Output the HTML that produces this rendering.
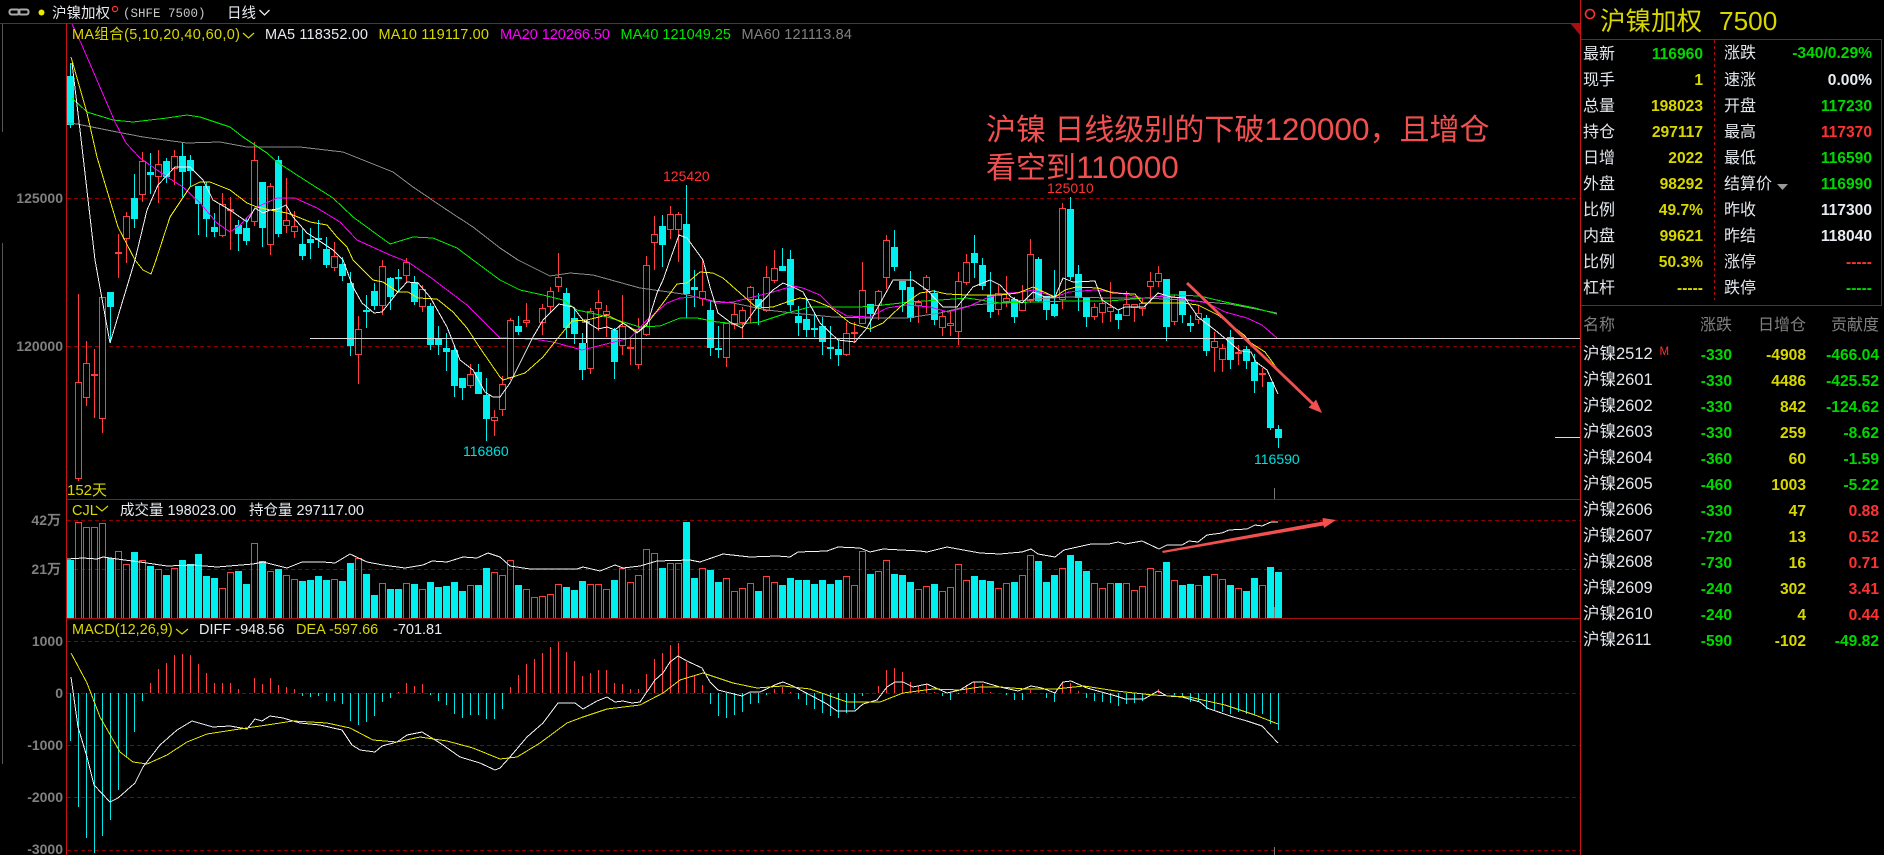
<!DOCTYPE html>
<html lang="zh"><head><meta charset="utf-8"><title>沪镍加权</title>
<style>
html,body{margin:0;padding:0;background:#000;width:1884px;height:855px;overflow:hidden}
svg{display:block;font-family:"Liberation Sans","Noto Sans CJK SC",sans-serif}
.l{shape-rendering:crispEdges;fill:none}
.t{font-size:16px;fill:#e4e8ec}
.b{font-size:15.6px;font-weight:bold;text-anchor:end}
.a{font-size:14px;font-weight:bold;fill:#808080;text-anchor:end}
.m{font-size:14.5px}
.n{font-size:16.5px;fill:#e4e8ec}
.g{fill:#00d800}.y{fill:#d8d800}.r{fill:#ff3232}.w{fill:#e8ecf0}
</style></head><body>
<svg width="1884" height="855" viewBox="0 0 1884 855" xmlns="http://www.w3.org/2000/svg">
<rect width="1884" height="855" fill="#000"/>
<!-- grid -->
<g class="l" stroke="#8c0000" stroke-dasharray="4 3">
<path d="M67 198.5H1580M67 346.5H1580M67 520.5H1580M67 569.5H1580M67 641.5H1580M67 693.5H1580M67 745.5H1580M67 797.5H1580M67 850.5H1580"/>
</g>
<!-- volume cyan -->
<path fill="#00f0f0" shape-rendering="crispEdges" d="M67 560h7V618h-7zM107 558h7V618h-7zM131 552h7V618h-7zM147 566h7V618h-7zM163 575h7V618h-7zM179 560h7V618h-7zM187 564h7V618h-7zM195 554h7V618h-7zM203 576h7V618h-7zM211 578h7V618h-7zM235 571h7V618h-7zM243 584h7V618h-7zM259 561h7V618h-7zM275 569h7V618h-7zM299 581h7V618h-7zM307 580h7V618h-7zM315 576h7V618h-7zM323 580h7V618h-7zM339 581h7V618h-7zM347 563h7V618h-7zM363 574h7V618h-7zM371 595h7V618h-7zM387 589h7V618h-7zM395 589h7V618h-7zM411 584h7V618h-7zM427 582h7V618h-7zM435 587h7V618h-7zM443 586h7V618h-7zM451 582h7V618h-7zM459 591h7V618h-7zM475 585h7V618h-7zM483 568h7V618h-7zM515 585h7V618h-7zM563 587h7V618h-7zM571 590h7V618h-7zM579 581h7V618h-7zM611 580h7V618h-7zM659 568h7V618h-7zM683 522h7V618h-7zM691 578h7V618h-7zM707 570h7V618h-7zM715 582h7V618h-7zM755 591h7V618h-7zM779 585h7V618h-7zM787 578h7V618h-7zM795 580h7V618h-7zM803 580h7V618h-7zM811 584h7V618h-7zM819 580h7V618h-7zM827 584h7V618h-7zM835 580h7V618h-7zM867 574h7V618h-7zM891 574h7V618h-7zM899 575h7V618h-7zM907 582h7V618h-7zM931 584h7V618h-7zM971 576h7V618h-7zM979 580h7V618h-7zM987 581h7V618h-7zM1011 582h7V618h-7zM1035 561h7V618h-7zM1043 582h7V618h-7zM1051 575h7V618h-7zM1067 555h7V618h-7zM1075 561h7V618h-7zM1083 571h7V618h-7zM1115 583h7V618h-7zM1163 562h7V618h-7zM1179 585h7V618h-7zM1187 584h7V618h-7zM1203 576h7V618h-7zM1227 585h7V618h-7zM1243 591h7V618h-7zM1251 578h7V618h-7zM1267 567h7V618h-7zM1275 572h7V618h-7z"/>
<!-- volume red -->
<path class="l" stroke="#ff3c3c" d="M75.5 618V522.5h6V618M83.5 618V527.5h6V618M91.5 618V527.5h6V618M99.5 618V523.5h6V618M115.5 618V551.5h6V618M123.5 618V564.5h6V618M139.5 618V560.5h6V618M155.5 618V569.5h6V618M171.5 618V568.5h6V618M219.5 618V588.5h6V618M227.5 618V572.5h6V618M251.5 618V543.5h6V618M267.5 618V571.5h6V618M283.5 618V575.5h6V618M291.5 618V579.5h6V618M331.5 618V579.5h6V618M355.5 618V558.5h6V618M379.5 618V583.5h6V618M403.5 618V583.5h6V618M419.5 618V589.5h6V618M467.5 618V585.5h6V618M491.5 618V572.5h6V618M499.5 618V575.5h6V618M507.5 618V560.5h6V618M523.5 618V589.5h6V618M531.5 618V597.5h6V618M539.5 618V596.5h6V618M547.5 618V594.5h6V618M555.5 618V584.5h6V618M587.5 618V584.5h6V618M595.5 618V584.5h6V618M603.5 618V589.5h6V618M619.5 618V568.5h6V618M627.5 618V582.5h6V618M635.5 618V575.5h6V618M643.5 618V549.5h6V618M651.5 618V553.5h6V618M667.5 618V563.5h6V618M675.5 618V563.5h6V618M699.5 618V568.5h6V618M723.5 618V578.5h6V618M731.5 618V591.5h6V618M739.5 618V588.5h6V618M747.5 618V583.5h6V618M763.5 618V576.5h6V618M771.5 618V582.5h6V618M843.5 618V576.5h6V618M851.5 618V585.5h6V618M859.5 618V551.5h6V618M875.5 618V571.5h6V618M883.5 618V560.5h6V618M915.5 618V589.5h6V618M923.5 618V586.5h6V618M939.5 618V591.5h6V618M947.5 618V587.5h6V618M955.5 618V564.5h6V618M963.5 618V580.5h6V618M995.5 618V588.5h6V618M1003.5 618V583.5h6V618M1019.5 618V575.5h6V618M1027.5 618V555.5h6V618M1059.5 618V568.5h6V618M1091.5 618V583.5h6V618M1099.5 618V588.5h6V618M1107.5 618V583.5h6V618M1123.5 618V583.5h6V618M1131.5 618V590.5h6V618M1139.5 618V586.5h6V618M1147.5 618V568.5h6V618M1155.5 618V571.5h6V618M1171.5 618V580.5h6V618M1195.5 618V585.5h6V618M1211.5 618V574.5h6V618M1219.5 618V579.5h6V618M1235.5 618V588.5h6V618M1259.5 618V585.5h6V618"/>
<!-- macd histogram -->
<path class="l" stroke="#00e8e8" d="M70.5 693V741M78.5 693V807M86.5 693V838M94.5 693V853M102.5 693V836M110.5 693V820M118.5 693V790M126.5 693V757M134.5 693V732M142.5 693V701M302.5 693V696M310.5 693V697M318.5 693V696M326.5 693V701M334.5 693V701M342.5 693V704M350.5 693V721M358.5 693V725M366.5 693V722M374.5 693V716M382.5 693V702M390.5 693V698M430.5 693V695M438.5 693V701M446.5 693V705M454.5 693V714M462.5 693V718M470.5 693V715M478.5 693V715M486.5 693V719M494.5 693V719M502.5 693V709M710.5 693V704M718.5 693V716M726.5 693V718M734.5 693V715M742.5 693V712M750.5 693V704M758.5 693V703M766.5 693V695M798.5 693V699M806.5 693V705M814.5 693V709M822.5 693V713M830.5 693V716M838.5 693V718M846.5 693V713M854.5 693V709M862.5 693V696M942.5 693V696M950.5 693V700M958.5 693V694M1006.5 693V695M1014.5 693V700M1022.5 693V700M1046.5 693V698M1054.5 693V702M1086.5 693V698M1094.5 693V701M1102.5 693V702M1110.5 693V703M1118.5 693V706M1126.5 693V704M1134.5 693V703M1142.5 693V701M1174.5 693V695M1182.5 693V697M1190.5 693V702M1198.5 693V702M1206.5 693V709M1214.5 693V710M1222.5 693V712M1230.5 693V714M1238.5 693V712M1246.5 693V714M1254.5 693V715M1262.5 693V714M1270.5 693V724M1278.5 693V730"/>
<path class="l" stroke="#ff3c3c" d="M150.5 693V683M158.5 693V669M166.5 693V663M174.5 693V655M182.5 693V654M190.5 693V655M198.5 693V664M206.5 693V673M214.5 693V683M222.5 693V683M230.5 693V683M238.5 693V689M254.5 693V678M262.5 693V684M270.5 693V678M278.5 693V685M286.5 693V687M294.5 693V689M398.5 693V692M406.5 693V683M414.5 693V686M422.5 693V684M510.5 693V687M518.5 693V675M526.5 693V664M534.5 693V659M542.5 693V653M550.5 693V647M558.5 693V642M566.5 693V652M574.5 693V661M582.5 693V676M590.5 693V673M598.5 693V670M606.5 693V670M614.5 693V683M622.5 693V684M630.5 693V689M638.5 693V689M646.5 693V674M654.5 693V659M662.5 693V653M670.5 693V645M678.5 693V643M686.5 693V662M694.5 693V675M702.5 693V685M774.5 693V689M782.5 693V687M790.5 693V692M878.5 693V686M886.5 693V670M894.5 693V668M902.5 693V672M910.5 693V682M918.5 693V686M926.5 693V684M934.5 693V692M966.5 693V685M974.5 693V682M982.5 693V684M990.5 693V692M1030.5 693V690M1062.5 693V682M1070.5 693V683M1078.5 693V691M1158.5 693V689"/>
<!-- candles cyan -->
<path fill="#00f0f0" stroke="#00f0f0" shape-rendering="crispEdges" d="M70.5 63V128M67.5 76.5h6V124.5h-6zM110.5 292V343M107.5 292.5h6V306.5h-6zM134.5 174V228M131.5 198.5h6V218.5h-6zM150.5 153V194M147.5 172.5h6V174.5h-6zM166.5 158V183M163.5 161.5h6V176.5h-6zM182.5 142V197M179.5 156.5h6V171.5h-6zM190.5 155V187M187.5 160.5h6V170.5h-6zM198.5 186V235M195.5 186.5h6V203.5h-6zM206.5 182V237M203.5 186.5h6V218.5h-6zM214.5 213V237M211.5 227.5h6V231.5h-6zM238.5 220V251M235.5 225.5h6V233.5h-6zM246.5 218V245M243.5 228.5h6V240.5h-6zM262.5 182V247M259.5 182.5h6V227.5h-6zM278.5 156V237M275.5 160.5h6V233.5h-6zM302.5 229V260M299.5 244.5h6V255.5h-6zM310.5 228V259M307.5 239.5h6V242.5h-6zM318.5 220V248M315.5 238.5h6V239.5h-6zM326.5 237V268M323.5 249.5h6V264.5h-6zM342.5 257V281M339.5 264.5h6V275.5h-6zM350.5 272V356M347.5 283.5h6V345.5h-6zM366.5 295V328M363.5 310.5h6V311.5h-6zM374.5 283V310M371.5 291.5h6V305.5h-6zM390.5 277V310M387.5 278.5h6V296.5h-6zM398.5 269V292M395.5 277.5h6V278.5h-6zM414.5 276V305M411.5 282.5h6V301.5h-6zM430.5 303V350M427.5 306.5h6V344.5h-6zM438.5 326V355M435.5 339.5h6V344.5h-6zM446.5 333V371M443.5 348.5h6V351.5h-6zM454.5 345V397M451.5 350.5h6V385.5h-6zM462.5 378V400M459.5 378.5h6V387.5h-6zM478.5 364V394M475.5 372.5h6V393.5h-6zM486.5 378V441M483.5 395.5h6V418.5h-6zM518.5 316V335M515.5 326.5h6V331.5h-6zM566.5 288V338M563.5 293.5h6V327.5h-6zM574.5 307V344M571.5 318.5h6V333.5h-6zM582.5 333V380M579.5 343.5h6V369.5h-6zM614.5 328V379M611.5 330.5h6V361.5h-6zM662.5 215V267M659.5 226.5h6V244.5h-6zM686.5 185V318M683.5 224.5h6V293.5h-6zM694.5 270V307M691.5 287.5h6V289.5h-6zM710.5 300V356M707.5 310.5h6V347.5h-6zM718.5 326V358M715.5 348.5h6V349.5h-6zM758.5 293V325M755.5 299.5h6V306.5h-6zM782.5 248V271M779.5 266.5h6V270.5h-6zM790.5 250V311M787.5 259.5h6V304.5h-6zM798.5 306V336M795.5 316.5h6V322.5h-6zM806.5 297V337M803.5 319.5h6V329.5h-6zM814.5 312V337M811.5 328.5h6V329.5h-6zM822.5 317V355M819.5 326.5h6V341.5h-6zM830.5 326V359M827.5 347.5h6V348.5h-6zM838.5 340V366M835.5 349.5h6V354.5h-6zM870.5 304V332M867.5 304.5h6V313.5h-6zM894.5 230V271M891.5 247.5h6V266.5h-6zM902.5 281V312M899.5 281.5h6V289.5h-6zM910.5 271V322M907.5 287.5h6V317.5h-6zM934.5 290V325M931.5 293.5h6V319.5h-6zM974.5 235V278M971.5 253.5h6V262.5h-6zM982.5 258V290M979.5 265.5h6V285.5h-6zM990.5 272V318M987.5 295.5h6V311.5h-6zM1014.5 297V323M1011.5 299.5h6V316.5h-6zM1038.5 257V302M1035.5 259.5h6V300.5h-6zM1046.5 296V320M1043.5 296.5h6V309.5h-6zM1054.5 270V317M1051.5 304.5h6V315.5h-6zM1070.5 197V280M1067.5 209.5h6V276.5h-6zM1078.5 265V311M1075.5 274.5h6V297.5h-6zM1086.5 298V327M1083.5 298.5h6V316.5h-6zM1118.5 310V329M1115.5 314.5h6V319.5h-6zM1166.5 279V341M1163.5 279.5h6V326.5h-6zM1182.5 291V323M1179.5 291.5h6V314.5h-6zM1190.5 315V332M1187.5 323.5h6V325.5h-6zM1206.5 315V356M1203.5 318.5h6V350.5h-6zM1230.5 330V369M1227.5 337.5h6V359.5h-6zM1246.5 346V369M1243.5 349.5h6V360.5h-6zM1254.5 354V393M1251.5 362.5h6V380.5h-6zM1270.5 382V430M1267.5 382.5h6V427.5h-6zM1278.5 425V448M1275.5 429.5h6V437.5h-6z"/>
<!-- candles red -->
<path class="l" stroke="#ff3c3c" d="M78.5 294V481M86.5 341V406M94.5 349V418M102.5 297V433M118.5 234V278M126.5 212V263M142.5 152V202M158.5 150V203M174.5 150V185M222.5 193V237M230.5 197V250M254.5 142V226M270.5 183V255M286.5 178V233M294.5 211V238M334.5 242V271M358.5 316V384M382.5 260V315M406.5 258V283M422.5 285V312M470.5 364V388M494.5 410V436M502.5 376V416M510.5 318V380M526.5 303V327M542.5 304V335M550.5 287V313M558.5 253V292M590.5 308V374M598.5 290V331M606.5 305V337M622.5 295V355M630.5 338V365M638.5 318V369M646.5 256V336M654.5 216V270M670.5 206V239M678.5 212V262M702.5 260V306M726.5 323V367M734.5 303V329M742.5 307V338M750.5 286V323M766.5 266V312M774.5 250V283M846.5 322V356M854.5 322V343M862.5 262V324M878.5 290V320M886.5 235V289M918.5 300V323M926.5 275V313M942.5 310V336M950.5 310V336M958.5 272V345M966.5 254V285M998.5 285V315M1006.5 276V307M1022.5 285V311M1030.5 239V303M1062.5 203V309M1094.5 303V320M1102.5 297V323M1110.5 282V322M1126.5 291V316M1134.5 304V322M1142.5 298V316M1150.5 272V303M1158.5 266V287M1174.5 295V325M1198.5 305V324M1214.5 332V372M1222.5 344V372M1238.5 345V365M1262.5 368V387"/>
<path fill="#000" stroke="#ff3c3c" shape-rendering="crispEdges" d="M75.5 382.5h6V478.5h-6zM83.5 363.5h6V397.5h-6zM91.5 374.5h6V375.5h-6zM99.5 297.5h6V418.5h-6zM115.5 252.5h6V253.5h-6zM123.5 216.5h6V238.5h-6zM139.5 161.5h6V194.5h-6zM155.5 164.5h6V176.5h-6zM171.5 156.5h6V168.5h-6zM219.5 204.5h6V235.5h-6zM227.5 209.5h6V210.5h-6zM251.5 160.5h6V221.5h-6zM267.5 186.5h6V244.5h-6zM283.5 220.5h6V225.5h-6zM291.5 226.5h6V231.5h-6zM331.5 256.5h6V267.5h-6zM355.5 329.5h6V354.5h-6zM379.5 266.5h6V305.5h-6zM403.5 262.5h6V275.5h-6zM419.5 289.5h6V306.5h-6zM467.5 374.5h6V385.5h-6zM491.5 417.5h6V420.5h-6zM499.5 384.5h6V409.5h-6zM507.5 320.5h6V377.5h-6zM523.5 320.5h6V322.5h-6zM539.5 308.5h6V322.5h-6zM547.5 291.5h6V306.5h-6zM555.5 277.5h6V286.5h-6zM587.5 311.5h6V368.5h-6zM595.5 302.5h6V308.5h-6zM603.5 311.5h6V314.5h-6zM619.5 326.5h6V345.5h-6zM627.5 347.5h6V348.5h-6zM635.5 329.5h6V364.5h-6zM643.5 265.5h6V334.5h-6zM651.5 234.5h6V242.5h-6zM667.5 214.5h6V229.5h-6zM675.5 214.5h6V229.5h-6zM699.5 291.5h6V298.5h-6zM723.5 323.5h6V357.5h-6zM731.5 314.5h6V324.5h-6zM739.5 310.5h6V322.5h-6zM747.5 287.5h6V299.5h-6zM763.5 277.5h6V310.5h-6zM771.5 268.5h6V280.5h-6zM843.5 333.5h6V354.5h-6zM851.5 332.5h6V333.5h-6zM859.5 290.5h6V323.5h-6zM875.5 291.5h6V305.5h-6zM883.5 240.5h6V277.5h-6zM915.5 302.5h6V305.5h-6zM923.5 277.5h6V289.5h-6zM939.5 316.5h6V327.5h-6zM947.5 323.5h6V325.5h-6zM955.5 281.5h6V331.5h-6zM963.5 262.5h6V282.5h-6zM995.5 293.5h6V309.5h-6zM1003.5 298.5h6V301.5h-6zM1019.5 300.5h6V310.5h-6zM1027.5 254.5h6V300.5h-6zM1059.5 208.5h6V299.5h-6zM1091.5 307.5h6V316.5h-6zM1099.5 303.5h6V312.5h-6zM1107.5 307.5h6V311.5h-6zM1123.5 304.5h6V315.5h-6zM1131.5 304.5h6V307.5h-6zM1139.5 303.5h6V308.5h-6zM1147.5 281.5h6V286.5h-6zM1155.5 273.5h6V281.5h-6zM1171.5 297.5h6V321.5h-6zM1195.5 313.5h6V319.5h-6zM1211.5 341.5h6V347.5h-6zM1219.5 348.5h6V359.5h-6zM1235.5 352.5h6V353.5h-6zM1259.5 373.5h6V374.5h-6z"/>
<path class="l" stroke="#fff" d="M582 322H590M586.5 320V343"/>
<!-- MA lines -->
<polyline class="l" stroke="#8a8a8a" points="68,123 77,124 117,132 143,137 187,143 220,142 247,147 300,147 343,152 393,172 413,187 447,210 473,227 500,248 518,260 550,276 570,273 593,275 640,288 683,294 713,301 733,303 767,310 793,313 833,317 867,318 907,318 940,313 973,305 1000,303 1036,299 1069,297 1109,298 1145,298 1182,300 1229,304 1277,313"/>
<polyline class="l" stroke="#00f000" points="72,98 87,112 113,120 133,122 167,118 187,115 200,117 230,127 243,137 267,153 277,162 300,177 333,198 353,217 390,244 413,237 433,238 457,248 473,260 500,280 520,290 543,295 563,300 577,310 600,315 617,320 640,327 660,326 680,318 697,318 717,322 740,324 760,322 787,313 810,307 833,307 860,307 883,305 910,302 940,300 967,298 1000,303 1036,302 1069,301 1109,301 1145,298 1171,295 1200,296 1225,302 1255,308 1277,314"/>
<polyline class="l" stroke="#ff00ff" points="72,24 81,43 115,122 126,143 140,158 167,177 183,187 200,203 217,223 230,232 240,225 257,207 277,198 295,198 317,208 340,222 357,240 390,255 408,262 430,277 467,305 500,338 533,339 553,342 582,350 610,343 630,338 647,320 667,303 680,298 697,297 717,303 733,302 753,297 773,292 793,286 803,288 820,295 833,308 847,316 870,317 887,308 907,305 930,307 948,312 967,307 987,298 1000,294 1022,292 1033,290 1055,297 1069,292 1095,290 1120,293 1142,298 1167,296 1185,299 1207,303 1225,312 1247,318 1262,325 1277,338"/>
<polyline class="l" stroke="#f0f000" points="71,57 87,113 97,157 118,227 135,260 143,270 151,274 156,260 170,217 190,187 200,182 210,182 230,190 247,203 257,207 270,210 287,213 293,215 310,222 327,225 337,237 347,247 353,260 373,280 383,282 398,292 408,292 418,298 437,299 453,312 467,328 480,348 500,377 503,380 525,373 543,357 558,338 572,321 587,320 607,315 623,323 638,332 650,320 663,303 677,284 687,283 700,272 713,273 723,278 740,293 757,308 773,307 787,302 800,298 813,300 830,307 850,323 870,329 883,323 900,307 920,293 933,291 947,294 967,295 1000,295 1018,293 1033,287 1055,297 1065,290 1076,287 1098,288 1113,293 1135,294 1142,303 1156,303 1182,303 1198,305 1218,315 1244,335 1251,343 1265,352 1273,363 1278,370"/>
<polyline class="l" stroke="#f4f4f4" points="72,63 80,130 95,260 110,343 135,260 147,210 158,185 175,167 190,167 203,180 213,200 230,210 247,222 255,208 263,213 270,210 278,209 286,205 293,217 307,233 318,240 333,250 343,260 353,287 362,303 374,313 382,312 397,293 407,282 418,283 430,297 447,327 460,360 473,370 485,392 493,397 500,397 510,383 520,363 533,337 543,320 559,304 573,307 583,320 598,329 607,327 615,330 623,323 637,333 647,325 657,293 663,280 670,260 679,235 687,238 703,260 710,287 718,313 730,322 742,328 757,307 773,290 783,283 793,287 803,292 820,323 838,340 855,342 867,328 878,307 893,280 913,280 927,290 943,307 957,307 973,287 990,280 1000,285 1011,297 1022,303 1033,292 1045,297 1055,297 1063,278 1073,282 1095,281 1102,300 1118,310 1125,307 1144,307 1158,293 1171,297 1185,298 1198,317 1215,330 1227,340 1240,351 1251,352 1256,362 1267,370 1278,394"/>
<!-- OI line -->
<polyline class="l" stroke="#f4f4f4" points="67,559 83,558 97,559 103,557 117,559 140,562 167,566 193,565 217,567 253,564 263,562 287,568 302,562 323,562 335,563 350,554 367,562 383,565 405,568 423,565 432,561 447,562 463,557 477,558 488,553 500,557 510,566 530,569 577,569 583,567 600,571 615,565 623,568 640,566 657,561 690,560 700,562 723,554 750,557 777,556 790,557 798,552 827,551 838,547 860,548 870,552 883,549 920,551 927,552 947,547 980,553 1000,554 1022,552 1031,549 1038,554 1055,557 1064,550 1091,544 1109,544 1118,542 1125,544 1142,541 1159,549 1167,545 1182,545 1189,541 1198,542 1207,535 1222,533 1229,530 1247,529 1255,525 1262,526 1271,522 1278,522"/>
<!-- MACD lines -->
<polyline class="l" stroke="#f4f4f4" points="71,677 78,727 87,757 94,785 110,802 118,798 135,783 143,767 160,745 177,730 192,721 213,727 230,726 247,729 255,719 262,721 270,716 283,718 300,723 320,725 342,730 352,745 360,750 375,752 382,746 397,742 407,735 422,732 440,743 460,757 480,763 495,770 500,768 510,757 527,737 543,723 558,703 575,703 583,709 597,701 607,697 615,702 623,701 632,703 640,702 655,680 663,673 670,662 678,656 687,661 702,668 710,682 718,690 730,693 742,696 750,692 760,692 777,684 783,682 793,686 810,695 827,704 837,711 855,711 863,704 877,700 887,687 895,682 903,682 913,687 927,684 947,693 960,690 973,682 983,682 1000,687 1018,691 1031,686 1042,688 1055,693 1063,682 1071,681 1087,688 1116,696 1125,699 1144,699 1158,691 1167,696 1182,697 1200,702 1207,708 1233,717 1247,721 1262,726 1278,743"/>
<polyline class="l" stroke="#e8e800" points="71,653 87,683 100,717 120,752 133,762 147,764 167,755 187,742 207,734 233,730 267,725 293,721 327,723 350,728 373,740 397,742 420,737 447,741 473,748 500,759 517,757 540,743 567,723 583,717 607,709 640,705 663,693 680,680 703,673 733,683 757,688 783,686 810,689 847,702 880,702 903,693 933,689 960,690 980,687 1000,687 1025,689 1055,689 1084,686 1116,691 1153,695 1189,697 1225,705 1255,715 1278,724"/>
<!-- frame -->
<g class="l">
<path stroke="#a81010" d="M0 23.5H1580M67 499.5H1580M67 618.5H1580M1580 39.5H1881.5V305.5H1580"/>
<path stroke="#c81414" d="M66.5 23V855M1580.5 0V855"/>
<path stroke="#a81010" stroke-dasharray="3 3" d="M1714.5 40V300"/>
<path stroke="#dcdcdc" d="M310 338.5H1580M1555 437.5H1580"/>
<path stroke="#777" d="M1274.5 488V499M1274.5 607V618M1274.5 847V855"/>
<path stroke="#555" d="M2.5 24V132M2.5 243V764"/>
</g>
<polygon points="1570,23 1580,23 1580,35" fill="#a81010"/>
<!-- arrows -->
<polygon fill="#f25050" points="1186,284 1188,282 1313.5,402.5 1316,399.5 1322,413 1308.5,407.5 1311.5,404.5"/>
<polygon fill="#f25050" points="1162,551 1323,521.5 1322.5,518 1336,520 1324,528 1323.5,525.5 1163,553"/>
<!-- header -->
<g fill="none" stroke="#aaa" stroke-width="2"><rect x="9.5" y="9.5" width="10" height="5" rx="2"/><rect x="18.5" y="9.5" width="10" height="5" rx="2"/></g>
<circle cx="41.5" cy="12.5" r="3" fill="#e8e800"/>
<text x="52" y="18" style="font-size:14.5px" class="w">沪镍加权</text>
<circle cx="115" cy="9" r="2.6" fill="none" stroke="#ff3232" stroke-width="1.2"/>
<text x="123" y="17" style="font-size:12.5px;font-family:'Liberation Mono',monospace;fill:#c8c8c8;white-space:pre" xml:space="preserve">(SHFE 7500)</text>
<text x="227" y="18" style="font-size:14.5px" class="w">日线</text>
<path d="M259.5 10l5 5 5-5" fill="none" stroke="#e8ecf0" stroke-width="1.3"/>
<!-- legends -->
<g class="m">
<text x="72" y="39" class="y" textLength="168" lengthAdjust="spacing">MA组合(5,10,20,40,60,0)</text>
<path d="M243 33l5.5 5 5.5-5" fill="none" stroke="#d8d800" stroke-width="1.2"/>
<text x="265" y="39" class="w" textLength="103" lengthAdjust="spacing">MA5 118352.00</text>
<text x="378.5" y="39" class="y" textLength="110.5" lengthAdjust="spacing">MA10 119117.00</text>
<text x="500" y="39" fill="#ff00ff" textLength="110" lengthAdjust="spacing">MA20 120266.50</text>
<text x="620.5" y="39" fill="#00e800" textLength="110.5" lengthAdjust="spacing">MA40 121049.25</text>
<text x="741.5" y="39" fill="#808080" textLength="110.5" lengthAdjust="spacing">MA60 121113.84</text>
<text x="72" y="515" class="y">CJL</text>
<path d="M96 506l6 5 6-5" fill="none" stroke="#d8d800" stroke-width="1.2"/>
<text x="120" y="515" class="w">成交量 198023.00</text>
<text x="249" y="515" class="w">持仓量 297117.00</text>
<text x="72" y="634" class="y">MACD(12,26,9)</text>
<path d="M176 629l6 5 6-5" fill="none" stroke="#d8d800" stroke-width="1.2"/>
<text x="199" y="634" class="w">DIFF -948.56</text>
<text x="296" y="634" class="y">DEA -597.66</text>
<text x="393" y="634" class="w">-701.81</text>
</g>
<!-- axis -->
<text x="63" y="203" class="a">125000</text>
<text x="63" y="351" class="a">120000</text>
<text x="61" y="525" class="a">42万</text>
<text x="61" y="574" class="a">21万</text>
<text x="63" y="646" class="a">1000</text>
<text x="63" y="698" class="a">0</text>
<text x="63" y="750" class="a">-1000</text>
<text x="63" y="802" class="a">-2000</text>
<text x="63" y="854" class="a">-3000</text>
<text x="67" y="495" style="font-size:15px" class="y">152天</text>
<!-- price labels -->
<text x="663" y="181" style="font-size:14px" class="r">125420</text>
<text x="1047" y="193" style="font-size:14px" class="r">125010</text>
<text x="463" y="456" style="font-size:14px" fill="#00e0e0">116860</text>
<text x="1254" y="464" style="font-size:14px" fill="#00e0e0">116590</text>
<!-- annotation -->
<text x="986" y="140" style="font-size:30px" fill="#f25050">沪镍 日线级别的下破<tspan style="font-size:31.5px">120000</tspan>，且增仓</text>
<text x="986" y="178" style="font-size:30px" fill="#f25050">看空到<tspan style="font-size:31.5px">110000</tspan></text>
<!-- right title -->
<circle cx="1590" cy="14" r="4.5" fill="none" stroke="#ff3232" stroke-width="1.6"/>
<text x="1600" y="30" style="font-size:25.5px" fill="#d8d800">沪镍加权<tspan x="1719" style="font-size:26.2px">7500</tspan></text>
<!-- quote -->
<text x="1583" y="59" class="t">最新</text><text x="1703" y="59" class="b g">116960</text>
<text x="1724" y="58" class="t">涨跌</text><text x="1872" y="58" class="b g">-340/0.29%</text>
<text x="1583" y="85" class="t">现手</text><text x="1703" y="85" class="b y">1</text>
<text x="1724" y="85" class="t">速涨</text><text x="1872" y="85" class="b w">0.00%</text>
<text x="1583" y="111" class="t">总量</text><text x="1703" y="111" class="b y">198023</text>
<text x="1724" y="111" class="t">开盘</text><text x="1872" y="111" class="b g">117230</text>
<text x="1583" y="137" class="t">持仓</text><text x="1703" y="137" class="b y">297117</text>
<text x="1724" y="137" class="t">最高</text><text x="1872" y="137" class="b r">117370</text>
<text x="1583" y="163" class="t">日增</text><text x="1703" y="163" class="b y">2022</text>
<text x="1724" y="163" class="t">最低</text><text x="1872" y="163" class="b g">116590</text>
<text x="1583" y="189" class="t">外盘</text><text x="1703" y="189" class="b y">98292</text>
<text x="1724" y="189" class="t">结算价</text><polygon points="1777,184 1788,184 1782.5,190" fill="#999"/><text x="1872" y="189" class="b g">116990</text>
<text x="1583" y="215" class="t">比例</text><text x="1703" y="215" class="b y">49.7%</text>
<text x="1724" y="215" class="t">昨收</text><text x="1872" y="215" class="b w">117300</text>
<text x="1583" y="241" class="t">内盘</text><text x="1703" y="241" class="b y">99621</text>
<text x="1724" y="241" class="t">昨结</text><text x="1872" y="241" class="b w">118040</text>
<text x="1583" y="267" class="t">比例</text><text x="1703" y="267" class="b y">50.3%</text>
<text x="1724" y="267" class="t">涨停</text><text x="1872" y="267" class="b r">-----</text>
<text x="1583" y="293" class="t">杠杆</text><text x="1703" y="293" class="b y">-----</text>
<text x="1724" y="293" class="t">跌停</text><text x="1872" y="293" class="b g">-----</text>
<!-- list header -->
<g style="font-size:16px" fill="#808080">
<text x="1583" y="330">名称</text>
<text x="1732" y="330" text-anchor="end">涨跌</text>
<text x="1806" y="330" text-anchor="end">日增仓</text>
<text x="1879" y="330" text-anchor="end">贡献度</text>
</g>
<text x="1659.5" y="355" style="font-size:11.5px" class="r">M</text>
<g>
<text x="1583" y="359" class="n">沪镍2512</text><text x="1732" y="360" class="b g">-330</text><text x="1806" y="360" class="b y">-4908</text><text x="1879" y="360" class="b g">-466.04</text>
<text x="1583" y="385" class="n">沪镍2601</text><text x="1732" y="386" class="b g">-330</text><text x="1806" y="386" class="b y">4486</text><text x="1879" y="386" class="b g">-425.52</text>
<text x="1583" y="411" class="n">沪镍2602</text><text x="1732" y="412" class="b g">-330</text><text x="1806" y="412" class="b y">842</text><text x="1879" y="412" class="b g">-124.62</text>
<text x="1583" y="437" class="n">沪镍2603</text><text x="1732" y="438" class="b g">-330</text><text x="1806" y="438" class="b y">259</text><text x="1879" y="438" class="b g">-8.62</text>
<text x="1583" y="463" class="n">沪镍2604</text><text x="1732" y="464" class="b g">-360</text><text x="1806" y="464" class="b y">60</text><text x="1879" y="464" class="b g">-1.59</text>
<text x="1583" y="489" class="n">沪镍2605</text><text x="1732" y="490" class="b g">-460</text><text x="1806" y="490" class="b y">1003</text><text x="1879" y="490" class="b g">-5.22</text>
<text x="1583" y="515" class="n">沪镍2606</text><text x="1732" y="516" class="b g">-330</text><text x="1806" y="516" class="b y">47</text><text x="1879" y="516" class="b r">0.88</text>
<text x="1583" y="541" class="n">沪镍2607</text><text x="1732" y="542" class="b g">-720</text><text x="1806" y="542" class="b y">13</text><text x="1879" y="542" class="b r">0.52</text>
<text x="1583" y="567" class="n">沪镍2608</text><text x="1732" y="568" class="b g">-730</text><text x="1806" y="568" class="b y">16</text><text x="1879" y="568" class="b r">0.71</text>
<text x="1583" y="593" class="n">沪镍2609</text><text x="1732" y="594" class="b g">-240</text><text x="1806" y="594" class="b y">302</text><text x="1879" y="594" class="b r">3.41</text>
<text x="1583" y="619" class="n">沪镍2610</text><text x="1732" y="620" class="b g">-240</text><text x="1806" y="620" class="b y">4</text><text x="1879" y="620" class="b r">0.44</text>
<text x="1583" y="645" class="n">沪镍2611</text><text x="1732" y="646" class="b g">-590</text><text x="1806" y="646" class="b y">-102</text><text x="1879" y="646" class="b g">-49.82</text>
</g>
</svg>
</body></html>
